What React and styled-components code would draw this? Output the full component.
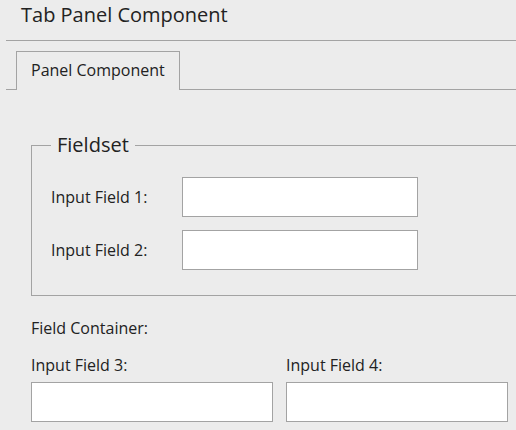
import React from "react";
import styled, { createGlobalStyle } from "styled-components";

const GlobalStyle = createGlobalStyle`
  html, body {
    margin: 0;
    padding: 0;
    background: #ececec;
    overflow: hidden;
  }
  body {
    font-family: "Open Sans", "DejaVu Sans", sans-serif;
    color: #222;
  }
`;

const Page = styled.div`
  width: 516px;
  height: 430px;
  overflow: hidden;
  background: #ececec;
`;

const Header = styled.div`
  box-sizing: border-box;
  height: 41px;
  margin-left: 6px;
  padding: 1px 0 0 15px;
  border-bottom: 1px solid #a3a3a3;
`;

const Title = styled.div`
  font-size: 20px;
  line-height: 27px;
`;

const TabBar = styled.div`
  display: flex;
  margin-left: 6px;
  padding: 10px 0 0 10px;
  border-bottom: 1px solid #a3a3a3;
`;

const Tab = styled.div`
  box-sizing: border-box;
  width: 164px;
  height: 39px;
  margin-bottom: -1px;
  padding: 0 0 0 14px;
  border: 1px solid #a3a3a3;
  border-bottom: none;
  background: #ececec;
  font-size: 16px;
  line-height: 36px;
`;

const PanelBody = styled.div`
  padding: 42px 0 0 31px;
`;

const Fieldset = styled.fieldset`
  box-sizing: border-box;
  width: 560px;
  margin: 0;
  padding: 19px 19px 25px;
  border: 1px solid #a3a3a3;
  display: flex;
  flex-direction: column;
  gap: 13px;
`;

const Legend = styled.legend`
  padding: 0 6px;
  font-size: 20px;
  line-height: 26px;
`;

const Row = styled.div`
  display: flex;
  align-items: center;
`;

const Label = styled.label`
  display: block;
  width: ${(p) => p.$width || "auto"};
  flex-shrink: 0;
  font-size: 16px;
  line-height: 20px;
`;

const Input = styled.input`
  box-sizing: border-box;
  display: block;
  width: ${(p) => p.$width};
  height: 40px;
  margin: 0;
  padding: 0 6px;
  border: 1px solid #a3a3a3;
  border-radius: 0;
  background: #fff;
  outline: none;
  font-family: inherit;
  font-size: 16px;
`;

const ContainerLabel = styled.div`
  margin-top: 22px;
  font-size: 16px;
  line-height: 20px;
`;

const FieldGrid = styled.div`
  display: flex;
  gap: 13px;
  margin-top: 17px;
`;

const Field = styled.div`
  display: flex;
  flex-direction: column;
  gap: 7px;
`;

export default function App() {
  return (
    <Page>
      <GlobalStyle />
      <Header>
        <Title>Tab Panel Component</Title>
      </Header>
      <TabBar>
        <Tab>Panel Component</Tab>
      </TabBar>
      <PanelBody>
        <Fieldset>
          <Legend>Fieldset</Legend>
          <Row>
            <Label $width="131px">Input Field 1:</Label>
            <Input $width="236px" />
          </Row>
          <Row>
            <Label $width="131px">Input Field 2:</Label>
            <Input $width="236px" />
          </Row>
        </Fieldset>
        <ContainerLabel>Field Container:</ContainerLabel>
        <FieldGrid>
          <Field>
            <Label>Input Field 3:</Label>
            <Input $width="242px" />
          </Field>
          <Field>
            <Label>Input Field 4:</Label>
            <Input $width="222px" />
          </Field>
        </FieldGrid>
      </PanelBody>
    </Page>
  );
}
